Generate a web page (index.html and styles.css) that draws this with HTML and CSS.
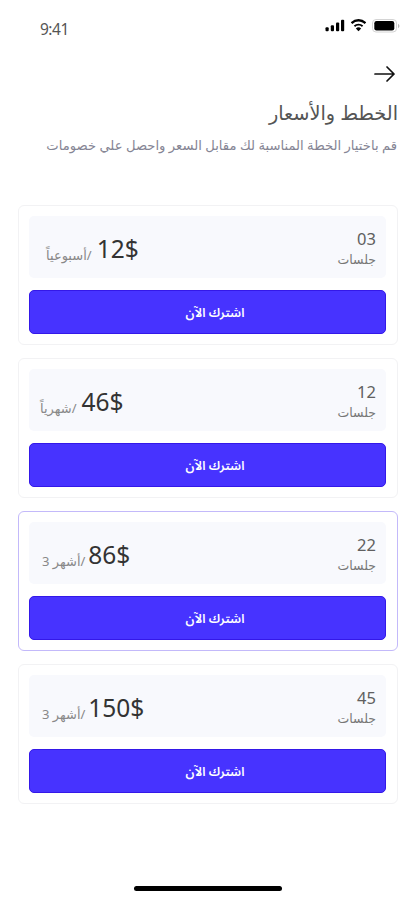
FILE: index.html
```html
<!DOCTYPE html>
<html lang="ar" dir="rtl">
<head>
    <meta charset="UTF-8">
    <meta name="viewport" content="width=device-width, initial-scale=1.0">
    <title>الخطط والأسعار</title>
    <link rel="stylesheet" href="styles.css">
</head>
<body>
    <div class="screen">
        <div class="status-bar" dir="ltr">
            <span class="time">9:41</span>
            <div class="status-icons">
                <svg width="20" height="14" viewBox="0 0 20 14">
                    <rect x="0.5" y="8.3" width="3.2" height="4" rx="1"/>
                    <rect x="5.8" y="6.2" width="3.2" height="6.1" rx="1"/>
                    <rect x="11" y="3.6" width="3.2" height="8.7" rx="1"/>
                    <rect x="16" y="0.8" width="3.2" height="11.5" rx="1"/>
                </svg>
                <svg width="17" height="13" viewBox="0 0 17 13">
                    <path d="M8.5 2.6c2.3 0 4.5.9 6.1 2.4l1.3-1.3a.4.4 0 0 0 0-.6 10.6 10.6 0 0 0-14.8 0 .4.4 0 0 0 0 .6L2.4 5a8.9 8.9 0 0 1 6.1-2.4z"/>
                    <path d="M8.5 6.6c1.3 0 2.5.5 3.4 1.3l1.3-1.3a6.9 6.9 0 0 0-9.4 0l1.3 1.3a5 5 0 0 1 3.4-1.3z"/>
                    <path d="M11.2 9.4a4.1 4.1 0 0 0-5.4 0l2.7 2.8z"/>
                </svg>
                <svg width="28" height="14" viewBox="0 0 28 14">
                    <rect x="0.5" y="0.5" width="24" height="12.5" rx="3.5" fill="none" stroke="#d4d4d4"/>
                    <rect x="2.3" y="2" width="20" height="9.5" rx="2.2"/>
                    <path d="M26 4.8v4.4c.9-.4 1.4-1.3 1.4-2.2s-.5-1.8-1.4-2.2z" fill="#bbb"/>
                </svg>
            </div>
        </div>

        <header class="header">
            <svg class="back" width="22" height="18" viewBox="0 0 22 18">
                <path d="M1 9h19M13 2l7 7-7 7" fill="none" stroke="#111" stroke-width="1.7" stroke-linecap="round" stroke-linejoin="round"/>
            </svg>
            <h1>الخطط والأسعار</h1>
            <p>قم باختيار الخطة المناسبة لك مقابل السعر واحصل علي خصومات</p>
        </header>

        <div class="plans">
            <div class="plan weekly">
                <div class="plan-info">
                    <div class="sessions"><span class="count">03</span><span class="label">جلسات</span></div>
                    <div class="price"><span class="amount" dir="ltr">12$</span><span class="period">/أسبوعياً</span></div>
                </div>
                <button>اشترك الآن</button>
            </div>
            <div class="plan monthly">
                <div class="plan-info">
                    <div class="sessions"><span class="count">12</span><span class="label">جلسات</span></div>
                    <div class="price"><span class="amount" dir="ltr">46$</span><span class="period">/شهرياً</span></div>
                </div>
                <button>اشترك الآن</button>
            </div>
            <div class="plan selected">
                <div class="plan-info">
                    <div class="sessions"><span class="count">22</span><span class="label">جلسات</span></div>
                    <div class="price"><span class="amount" dir="ltr">86$</span><span class="period">/أشهر 3</span></div>
                </div>
                <button>اشترك الآن</button>
            </div>
            <div class="plan">
                <div class="plan-info">
                    <div class="sessions"><span class="count">45</span><span class="label">جلسات</span></div>
                    <div class="price"><span class="amount" dir="ltr">150$</span><span class="period">/أشهر 3</span></div>
                </div>
                <button>اشترك الآن</button>
            </div>
        </div>

        <div class="home-indicator"></div>
    </div>
</body>
</html>
```

FILE: styles.css
```css
* {
    box-sizing: border-box;
}
body {
    margin: 0;
    background: #fff;
    font-family: "Noto Sans", "DejaVu Sans", sans-serif;
}
.screen {
    display: flex;
    flex-direction: column;
    width: 415px;
    height: 900px;
    padding: 0 17px 0 18px;
    overflow: hidden;
}
.status-bar {
    display: flex;
    justify-content: space-between;
    height: 64px;
    padding: 19px 0 0 22px;
}
.time {
    font-size: 15.5px;
    line-height: 20px;
    letter-spacing: -0.5px;
    color: #555;
}
.status-icons {
    display: flex;
    gap: 5px;
    margin-right: -2px;
}
.header {
    height: 141px;
}
.back {
    display: block;
    margin: 1px 2px 0 0;
}
h1 {
    margin: 15px 0 0;
    font-size: 19.3px;
    font-weight: 400;
    line-height: 30px;
    color: #555;
    white-space: nowrap;
}
.header p {
    margin: 7px 1px 0 0;
    font-size: 13.15px;
    line-height: 20px;
    color: #858594;
    white-space: nowrap;
}
.plans {
    display: flex;
    flex-direction: column;
    gap: 13px;
}
.plan {
    height: 140px;
    padding: 10px 11px 10px 10px;
    border: 1px solid #f2f2f4;
    border-radius: 6px;
}
.plan.selected {
    border-color: #c3b9fa;
}
.plan-info {
    display: flex;
    justify-content: space-between;
    height: 62px;
    padding: 12px 10px 0 13px;
    border-radius: 5px;
    background: #f8f9fd;
}
.weekly .plan-info {
    padding-left: 17px;
}
.monthly .plan-info {
    padding-left: 11px;
}
.sessions {
    display: flex;
    flex-direction: column;
}
.count {
    font-size: 16.5px;
    line-height: 21px;
    color: #606060;
}
.label {
    font-size: 12.5px;
    line-height: 22px;
    color: #777;
}
.price {
    display: flex;
    gap: 3px;
    height: 42px;
}
.weekly .price,
.monthly .price {
    gap: 5px;
}
.amount {
    font-size: 24.5px;
    line-height: 42px;
    color: #333;
}
.period {
    padding-top: 7px;
    font-size: 13px;
    line-height: 40px;
    color: #888;
}
button {
    display: block;
    width: 100%;
    height: 44px;
    margin-top: 12px;
    padding: 2px 0 0 15px;
    border: 1px solid #3418e8;
    border-radius: 5px;
    background: #4733ff;
    color: #fff;
    font-family: "Noto Sans", "Noto Sans Arabic", sans-serif;
    font-size: 12.5px;
    font-weight: 600;
}
.home-indicator {
    width: 148px;
    height: 5px;
    margin: 82px auto 0;
    border-radius: 3px;
    background: #000;
}
```
